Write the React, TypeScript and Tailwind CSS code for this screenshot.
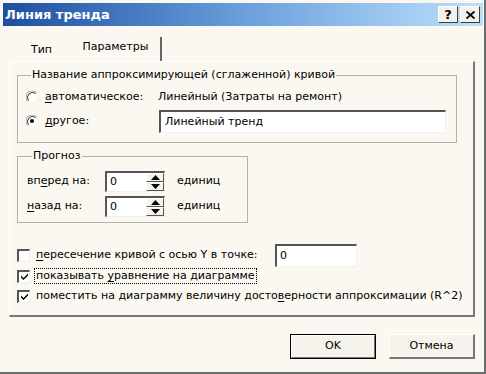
import React from 'react';

const FONT = { fontFamily: '"DejaVu Sans", Tahoma, sans-serif' };

function Radio({ checked }: { checked?: boolean }) {
    return (
        <svg width="12" height="12" viewBox="0 0 12 12" className="shrink-0">
            <circle cx="6" cy="6" r="5.5" fill="#ffffff" />
            <path d="M1.6 10.4 A6 6 0 0 1 10.4 1.6" fill="none" stroke="#8a8a8a" strokeWidth="1" />
            <path d="M2.5 9.5 A5 5 0 0 1 9.5 2.5" fill="none" stroke="#333333" strokeWidth="1" />
            <path d="M10.4 1.6 A6 6 0 0 1 1.6 10.4" fill="none" stroke="#f2efe6" strokeWidth="1" />
            {checked && <circle cx="6" cy="6" r="2" fill="#000000" />}
        </svg>
    );
}

function Checkbox({ checked }: { checked?: boolean }) {
    return (
        <div className="w-[13px] h-[13px] shrink-0 bg-white border-t-2 border-l-2 border-t-[#555] border-l-[#555] border-r border-b border-r-[#f3f0e8] border-b-[#f3f0e8] flex items-center justify-center">
            {checked && (
                <svg width="9" height="9" viewBox="0 0 9 9">
                    <path d="M1 3.5 L3.5 6 L8 1.5 L8 3.5 L3.5 8 L1 5.5 Z" fill="#000" />
                </svg>
            )}
        </div>
    );
}

function SpinButton({ up }: { up?: boolean }) {
    return (
        <div className="flex-1 bg-[#f6f3ec] border-t border-l border-t-white border-l-white border-r border-b border-r-[#555] border-b-[#555] flex items-center justify-center">
            <svg width="9" height="5" viewBox="0 0 9 5">
                {up ? <path d="M0 5 L4.5 0 L9 5 Z" fill="#000" /> : <path d="M0 0 L9 0 L4.5 5 Z" fill="#000" />}
            </svg>
        </div>
    );
}

function Spinner() {
    return (
        <div className="w-[60px] h-[21px] shrink-0 bg-white border-t-2 border-l-2 border-t-[#555] border-l-[#555] border-r border-b border-r-[#f3f0e8] border-b-[#f3f0e8] flex">
            <span className="flex-1 pl-[3px] leading-[18px]">0</span>
            <div className="w-[18px] flex flex-col">
                <SpinButton up />
                <SpinButton />
            </div>
        </div>
    );
}

export default function App() {
    return (
        <div
            className="w-[486px] h-[374px] bg-[#fbf8f1] text-black text-[11px] flex flex-col pt-[3px] pl-[3px] border-r-2 border-b-2 border-r-[#6d6d6d] border-b-[#6d6d6d] overflow-hidden"
            style={FONT}
        >
            {/* Title bar */}
            <div className="h-[23px] mr-[1px] bg-linear-to-r from-[#1d4f9f] via-[#6a9fdc] to-[#bde0fb] flex items-center pl-[2px] pr-[3px]">
                <span className="text-white font-bold text-[13px] flex-1">Линия тренда</span>
                <div className="w-[20px] h-[17px] bg-[#f4f1ea] border-t border-l border-t-white border-l-white border-r border-b border-r-[#404040] border-b-[#404040] flex items-center justify-center font-bold text-[13px] leading-none">
                    ?
                </div>
                <div className="w-[20px] h-[17px] ml-[2px] bg-[#f4f1ea] border-t border-l border-t-white border-l-white border-r border-b border-r-[#404040] border-b-[#404040] flex items-center justify-center">
                    <svg width="9" height="8" viewBox="0 0 9 8">
                        <path d="M0.5 0.5 L8.5 7.5 M8.5 0.5 L0.5 7.5" stroke="#000" strokeWidth="1.8" />
                    </svg>
                </div>
            </div>

            {/* Tabs */}
            <div className="h-[35px] flex items-end pl-[9px]">
                <div className="w-[59px] h-[22px] flex items-center justify-center">Тип</div>
                <div className="w-[91px] h-[24px] flex items-center justify-center border-r-2 border-r-[#666] pb-[3px]">
                    Параметры
                </div>
            </div>

            {/* Tab panel */}
            <div className="ml-[6px] w-[466px] h-[256px] border-t border-l border-t-white border-l-white border-r-2 border-b-2 border-r-[#7a7a7a] border-b-[#7a7a7a] flex flex-col pl-[7px] pt-[6px]">
                <fieldset className="w-[440px] border border-[#b3b1a8] pl-[8px] pb-[9px]">
                    <legend className="ml-[5px] px-[1px] leading-[14px]">
                        Название аппроксимирующей (сглаженной) кривой
                    </legend>
                    <div className="flex items-center h-[24px] mt-[3px]">
                        <Radio />
                        <span className="ml-[7px] w-[113px] shrink-0">
                            <u className="underline-offset-2">а</u>втоматическое:
                        </span>
                        <span className="shrink-0">Линейный (Затраты на ремонт)</span>
                    </div>
                    <div className="flex items-center h-[24px]">
                        <Radio checked />
                        <span className="ml-[7px] w-[113px] shrink-0">
                            <u className="underline-offset-2">д</u>ругое:
                        </span>
                        <div className="ml-[1px] w-[287px] h-[23px] shrink-0 bg-white border-t-2 border-l-2 border-t-[#555] border-l-[#555] border-r border-b border-r-[#f3f0e8] border-b-[#f3f0e8] pl-[4px] leading-[19px]">
                            Линейный тренд
                        </div>
                    </div>
                </fieldset>

                <fieldset className="w-[231px] mt-[6px] border border-[#b3b1a8] pl-[9px] pb-[5px]">
                    <legend className="ml-[5px] px-[1px] leading-[14px]">Прогноз</legend>
                    <div className="flex items-center h-[21px] mt-[8px]">
                        <span className="w-[78px] shrink-0">
                            вп<u className="underline-offset-2">е</u>ред на:
                        </span>
                        <Spinner />
                        <span className="ml-[12px]">единиц</span>
                    </div>
                    <div className="flex items-center h-[21px] mt-[4px]">
                        <span className="w-[78px] shrink-0">
                            <u className="underline-offset-2">н</u>азад на:
                        </span>
                        <Spinner />
                        <span className="ml-[12px]">единиц</span>
                    </div>
                </fieldset>

                <div className="flex items-center h-[23px] mt-[21px]">
                    <Checkbox />
                    <span className="ml-[6px] w-[239px] shrink-0">
                        <u className="underline-offset-2">п</u>ересечение кривой с осью Y в точке:
                    </span>
                    <div className="w-[82px] h-[23px] shrink-0 bg-white border-t-2 border-l-2 border-t-[#555] border-l-[#555] border-r border-b border-r-[#f3f0e8] border-b-[#f3f0e8] pl-[3px] leading-[19px]">
                        0
                    </div>
                </div>
                <div className="flex items-center h-[18px]">
                    <Checkbox checked />
                    <span className="ml-[4px] px-[1px] border border-dotted border-black leading-[14px]">
                        показывать <u className="underline-offset-2">у</u>равнение на диаграмме
                    </span>
                </div>
                <div className="flex items-center h-[18px] mt-[2px]">
                    <Checkbox checked />
                    <span className="ml-[6px]">
                        поместить на диаграмму величину досто<u className="underline-offset-2">в</u>ерности аппроксимации (R^2)
                    </span>
                </div>
            </div>

            {/* Buttons */}
            <div className="flex justify-end gap-[13px] pr-[9px] mt-[17px]">
                <div className="w-[86px] h-[25px] border border-black flex">
                    <div className="flex-1 bg-[#f6f3ec] border-t border-l border-t-white border-l-white border-r border-b border-r-[#777] border-b-[#777] flex items-center justify-center">
                        OK
                    </div>
                </div>
                <div className="w-[86px] h-[25px] bg-[#f6f3ec] border-t border-l border-t-white border-l-white border-r-2 border-b-2 border-r-[#777] border-b-[#777] flex items-center justify-center">
                    Отмена
                </div>
            </div>
        </div>
    );
}
